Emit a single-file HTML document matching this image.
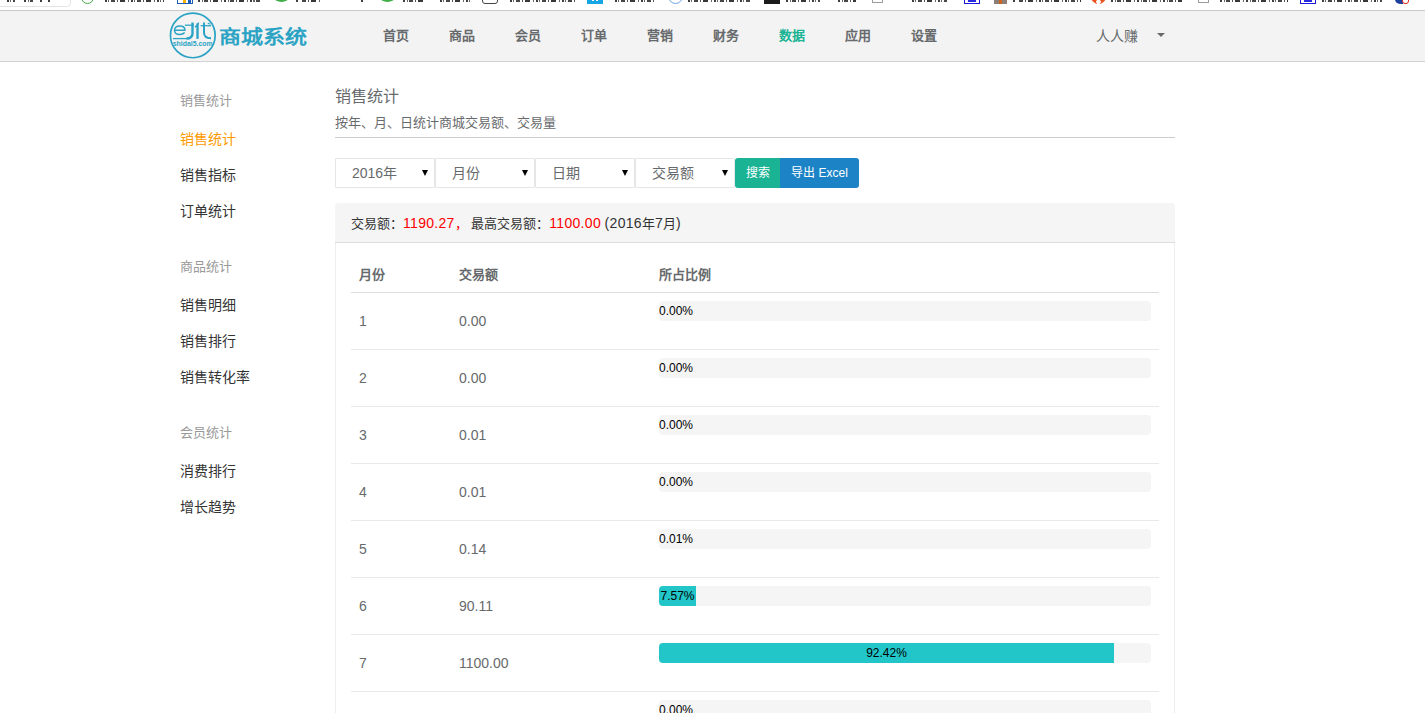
<!DOCTYPE html>
<html lang="zh-CN">
<head>
<meta charset="utf-8">
<title>销售统计</title>
<style>
*{box-sizing:border-box;}
html,body{margin:0;padding:0;}
body{width:1425px;height:713px;overflow:hidden;background:#fff;position:relative;
  font-family:"Liberation Sans",sans-serif;font-size:13px;color:#676a6c;}
a{text-decoration:none;color:inherit;}

/* cropped browser bookmark bar */
#bm{position:absolute;left:0;top:0;width:1425px;height:10px;background:#fff;overflow:hidden;}
#bm i{position:absolute;top:0;display:block;}
#bm i.t{height:1.5px;opacity:.9;background:repeating-linear-gradient(90deg,#2a2a2a 0 2px,rgba(0,0,0,0) 2px 3.5px,#555 3.5px 4.5px,rgba(0,0,0,0) 4.5px 6px,#333 6px 10px,rgba(0,0,0,0) 10px 12px,#444 12px 13px,rgba(0,0,0,0) 13px 15px,#222 15px 20px,rgba(0,0,0,0) 20px 23px,#555 23px 24px,rgba(0,0,0,0) 24px 26px);}
#bmline{position:absolute;left:0;top:10px;width:1425px;height:1px;background:#c9c9c9;}

/* header */
#hd{position:absolute;left:0;top:11px;width:1425px;height:51px;background:#f3f3f3;border-bottom:1px solid #d2d2d2;}
#logo{position:absolute;left:168px;top:0;width:142px;height:50px;}
#nav{position:absolute;left:0;top:0;height:50px;}
#nav a{position:absolute;top:16px;width:66px;text-align:center;font-size:13px;font-weight:bold;line-height:18px;color:#676a6c;}
#nav a.on{color:#1ab394;}
#user{position:absolute;left:1096px;top:15px;font-size:14px;line-height:20px;color:#676a6c;}
#caret{position:absolute;left:1157px;top:22px;width:0;height:0;border-left:4px solid transparent;border-right:4px solid transparent;border-top:4px solid #676a6c;}

/* sidebar */
#side{position:absolute;left:180px;top:0;}
#side div{position:absolute;left:0;white-space:nowrap;line-height:20px;height:20px;}
#side .g{font-size:13px;color:#999;}
#side .m{font-size:14px;color:#333;}
#side .m.on{color:#ff9900;}

/* main */
#title{position:absolute;left:335px;top:86px;font-size:16px;line-height:22px;color:#676a6c;white-space:nowrap;}
#sub{position:absolute;left:335px;top:114px;font-size:13px;line-height:18px;color:#676a6c;white-space:nowrap;}
#hr{position:absolute;left:335px;top:137px;width:840px;height:1px;background:#ccc;}

.sel{position:absolute;top:158px;width:100px;height:30px;border:1px solid #e5e6e7;border-radius:1px;background:#fff;font-size:14px;line-height:28px;padding-left:16px;color:#676a6c;white-space:nowrap;}
.sel b{position:absolute;left:86px;top:11px;width:0;height:0;border-left:3.5px solid transparent;border-right:3.5px solid transparent;border-top:6px solid #000;}
.btn{position:absolute;top:158px;height:30px;color:#fff;font-size:12px;line-height:30px;text-align:center;white-space:nowrap;}
#b1{left:735px;width:45px;background:#1ab394;border-radius:3px 0 0 3px;}
#b2{left:780px;width:79px;background:#1c84c6;border-radius:0 3px 3px 0;}

/* panel */
#panel{position:absolute;left:335px;top:203px;width:840px;height:560px;border:1px solid #eee;border-radius:4px;background:#fff;}
#ph{position:absolute;left:-1px;top:-1px;width:840px;height:40px;background:#f5f5f5;border-bottom:1px solid #ddd;border-radius:4px 4px 0 0;padding:10px 16px;font-size:13px;line-height:20px;color:#333;white-space:nowrap;}
#ph span{color:#f00;}
#ph em{font-style:normal;font-size:14px;letter-spacing:0.3px;}
table{position:absolute;left:15px;top:51px;width:808px;border-collapse:collapse;table-layout:fixed;}
th,td{padding:8px;text-align:left;font-size:13px;color:#676a6c;}
th{height:37px;line-height:20px;font-weight:bold;border-bottom:1px solid #ddd;vertical-align:middle;padding-top:10px;padding-bottom:7px;}
td{font-size:14px;height:57px;border-top:1px solid #e7eaec;vertical-align:middle;line-height:20px;}
td.p{vertical-align:top;}
.pg{height:20px;width:492px;background:#f5f5f5;border-radius:4px;overflow:hidden;font-size:12px;line-height:21px;color:#000;white-space:nowrap;position:relative;}
.pg u{display:block;height:20px;background:#23c6c8;text-decoration:none;text-align:center;}
</style>
</head>
<body>
<div id="bm"><i class="t" style="left:7px;width:8px"></i><i class="t" style="left:24px;width:9px"></i><i class="t" style="left:40px;width:2px"></i><i class="t" style="left:48px;width:4px"></i><i class="t" style="left:105px;width:59px"></i><i class="t" style="left:198px;width:62px"></i><i class="t" style="left:296px;width:24px"></i><i class="t" style="left:361px;width:2px"></i><i class="t" style="left:403px;width:20px"></i><i class="t" style="left:440px;width:30px"></i><i class="t" style="left:510px;width:65px"></i><i class="t" style="left:615px;width:41px"></i><i class="t" style="left:688px;width:64px"></i><i class="t" style="left:786px;width:34px"></i><i class="t" style="left:838px;width:18px"></i><i class="t" style="left:912px;width:35px"></i><i class="t" style="left:1013px;width:68px"></i><i class="t" style="left:1111px;width:71px"></i><i class="t" style="left:1220px;width:68px"></i><i class="t" style="left:1322px;width:60px"></i><i style="left:-4px;top:-10px;width:75px;height:17px;border:1px solid #e4e4e4;border-radius:0 0 4px 0"></i><i style="left:80.5px;top:-9.5px;width:13px;height:13px;border:1.3px solid #4bb14f;border-radius:50%"></i><i style="left:177px;top:-12px;width:16px;height:16px;border:1px solid #1a5fb4;background:linear-gradient(90deg,#fff 0 5px,#f5b400 5px 8px,#fff 8px 10px,#1a5fb4 10px 13px,#fff 13px)"></i><i style="left:274px;top:-8px;width:15px;height:10px;background:#3fae49;border-radius:50%"></i><i style="left:380px;top:-8px;width:15px;height:10px;background:#3fae49;border-radius:50%"></i><i style="left:482px;top:-12px;width:16px;height:16px;border:1.5px solid #444;border-radius:3px;background:linear-gradient(180deg,#555 0 10.5px,#fff 10.5px)"></i><i style="left:587px;top:-12px;width:16px;height:16px;background:#17a5e6"></i><i style="left:592px;top:0;width:2px;height:1px;background:#fff"></i><i style="left:596px;top:0;width:2px;height:1px;background:#fff"></i><i style="left:668px;top:-11px;width:15px;height:15px;border:1px solid #6aa5e0;border-radius:50%"></i><i style="left:764px;top:-12px;width:16px;height:16px;background:#1c1c1c"></i><i style="left:872px;top:-12px;width:11px;height:15px;border:1px solid #9a9a9a;background:#fff"></i><i style="left:1198px;top:-12px;width:11px;height:15px;border:1px solid #9a9a9a;background:#fff"></i><i style="left:964px;top:-12px;width:16px;height:16px;border:1px solid #1a1ae0;background:linear-gradient(180deg,#2a2ae0 0 12.6px,#fff 12.6px);box-shadow:inset 3px 0 0 0 #fff,inset -3px 0 0 0 #fff"></i><i style="left:1300px;top:-12px;width:16px;height:16px;border:1px solid #1a1ae0;background:linear-gradient(180deg,#2a2ae0 0 12.6px,#fff 12.6px);box-shadow:inset 3px 0 0 0 #fff,inset -3px 0 0 0 #fff"></i><i style="left:994px;top:-12px;width:13px;height:15.5px;background:linear-gradient(90deg,#8a8078 0 5px,#d0641e 5px 8px,#8a8078 8px)"></i><i style="left:1091px;top:-11px;width:15px;height:15px;background:radial-gradient(circle at 50% 85%,#fff 0 2px,#e9531f 2.5px);border-radius:50%"></i><i style="left:1395px;top:-6px;width:8px;height:9.5px;background:#1d3f9e;border-radius:0 0 0 5px"></i><i style="left:1402px;top:-8px;width:7px;height:12px;border:1.2px solid #e0261c;border-radius:0 0 3px 3px;background:#fff"></i></div>
<div id="bmline"></div>

<div id="hd">
  <div id="logo">
    <svg width="142" height="50" viewBox="0 0 142 50">
      <g fill="none" stroke="#2ba3c4" stroke-linecap="butt" stroke-linejoin="round">
      <circle cx="24.8" cy="24.4" r="22.35" stroke-width="1.7"/>
      <path d="M6.6 19.2 H17 C17 16.2 14.8 14.9 11.8 14.9 C8.6 14.9 6.5 16.7 6.5 19.2 C6.5 21.8 8.6 23.5 11.8 23.5 C13.9 23.5 15.6 22.8 16.6 21.6" stroke-width="1.5"/>
      <path d="M5 27.6 H22.5" stroke-width="1.3"/>
      <path d="M16.9 14.2 H26" stroke-width="1.3"/>
      <path d="M24.5 11.6 V22.5 Q24.5 27.3 18.5 27.5" stroke-width="2.4"/>
      <path d="M29.5 12.5 V27.9" stroke-width="2.4"/>
      <path d="M30.6 11.6 Q29.8 14.4 27 16.2" stroke-width="1.6"/>
      <path d="M32.6 14.7 H43" stroke-width="1.3"/>
      <path d="M36 11.6 V21.5 Q36 27.2 43 27.2" stroke-width="2"/>
      <path d="M39.8 12.3 L42.4 13.2" stroke-width="1.2"/>
      </g>
      <text x="4.7" y="34.5" font-family="Liberation Sans, sans-serif" font-size="7" font-weight="bold" fill="#2ba3c4" textLength="40" lengthAdjust="spacingAndGlyphs">shidai5.com</text>
      <text transform="translate(50.5 32.6) scale(1 0.88)" x="0" y="0" font-family="Liberation Sans, sans-serif" font-size="22" font-weight="bold" fill="#2ba3c4">商城系统</text>
    </svg>
  </div>
  <div id="nav">
    <a style="left:363px">首页</a>
    <a style="left:429px">商品</a>
    <a style="left:495px">会员</a>
    <a style="left:561px">订单</a>
    <a style="left:627px">营销</a>
    <a style="left:693px">财务</a>
    <a style="left:759px" class="on">数据</a>
    <a style="left:825px">应用</a>
    <a style="left:891px">设置</a>
  </div>
  <div id="user">人人赚</div>
  <div id="caret"></div>
</div>

<div id="side">
  <div class="g" style="top:91px">销售统计</div>
  <div class="m on" style="top:129px">销售统计</div>
  <div class="m" style="top:165px">销售指标</div>
  <div class="m" style="top:201px">订单统计</div>
  <div class="g" style="top:257px">商品统计</div>
  <div class="m" style="top:295px">销售明细</div>
  <div class="m" style="top:331px">销售排行</div>
  <div class="m" style="top:367px">销售转化率</div>
  <div class="g" style="top:423px">会员统计</div>
  <div class="m" style="top:461px">消费排行</div>
  <div class="m" style="top:497px">增长趋势</div>
</div>

<div id="title">销售统计</div>
<div id="sub">按年、月、日统计商城交易额、交易量</div>
<div id="hr"></div>

<div class="sel" style="left:335px">2016年<b></b></div>
<div class="sel" style="left:435px">月份<b></b></div>
<div class="sel" style="left:535px">日期<b></b></div>
<div class="sel" style="left:635px">交易额<b></b></div>
<div class="btn" id="b1">搜索</div>
<div class="btn" id="b2">导出 Excel</div>

<div id="panel">
  <div id="ph">交易额：<span><em>1190.27</em>，</span> 最高交易额：<span><em>1100.00</em></span> <em>(2016</em>年<em>7</em>月<em>)</em></div>
  <table>
    <colgroup><col style="width:100px"><col style="width:200px"><col style="width:508px"></colgroup>
    <thead><tr><th>月份</th><th>交易额</th><th>所占比例</th></tr></thead>
    <tbody>
      <tr><td>1</td><td>0.00</td><td class="p"><div class="pg">0.00%</div></td></tr>
      <tr><td>2</td><td>0.00</td><td class="p"><div class="pg">0.00%</div></td></tr>
      <tr><td>3</td><td>0.01</td><td class="p"><div class="pg">0.00%</div></td></tr>
      <tr><td>4</td><td>0.01</td><td class="p"><div class="pg">0.00%</div></td></tr>
      <tr><td>5</td><td>0.14</td><td class="p"><div class="pg">0.01%</div></td></tr>
      <tr><td>6</td><td>90.11</td><td class="p"><div class="pg"><u style="width:37px">7.57%</u></div></td></tr>
      <tr><td>7</td><td>1100.00</td><td class="p"><div class="pg"><u style="width:455px">92.42%</u></div></td></tr>
      <tr><td>8</td><td>0.00</td><td class="p"><div class="pg">0.00%</div></td></tr>
      <tr><td>9</td><td>0.00</td><td class="p"><div class="pg">0.00%</div></td></tr>
    </tbody>
  </table>
</div>
</body>
</html>
